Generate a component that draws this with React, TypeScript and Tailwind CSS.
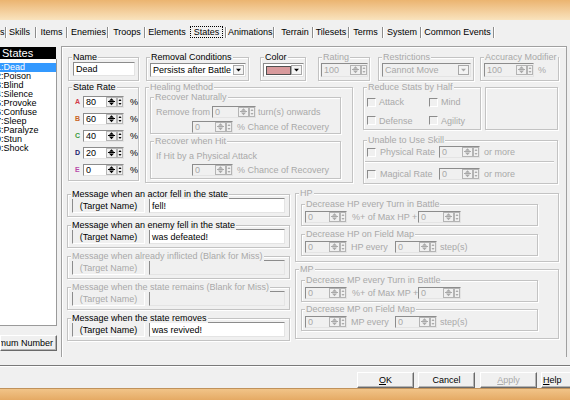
import React from 'react';

type P = { className?: string; children?: React.ReactNode; dis?: boolean };

const DIS = 'text-[#a9a9a9]';
const SUNK = 'border border-t-[#8c8c8c] border-l-[#8c8c8c] border-b-[#e4e4e4] border-r-[#e4e4e4]';

function Group({ legend, dis, className = '', children }: P & { legend?: string }) {
  return (
    <div className={`relative shrink-0 border border-[#c3c3c3] shadow-[inset_1px_1px_0_#ffffff,1px_1px_0_#ffffff] ${className}`}>
      {legend ? (
        <span className={`absolute left-[3px] -top-[6px] px-[1px] bg-[#f0f0f0] leading-[10px] whitespace-nowrap ${dis ? DIS : 'text-black'}`}>
          {legend}
        </span>
      ) : null}
      {children}
    </div>
  );
}

function SpinBtns({ dis }: { dis?: boolean }) {
  const c = dis ? '#a9a9a9' : '#000000';
  return (
    <svg width="17" height="10" viewBox="0 0 17 10" className="shrink-0">
      <rect x="0.5" y="0.5" width="10" height="9" fill="#f0f0f0" stroke="#b4b4b4" />
      <path d="M5.5 1.2 L8 3.7 L3 3.7 Z" fill={c} />
      <line x1="2" y1="4.5" x2="9" y2="4.5" stroke={c} strokeWidth="1" />
      <path d="M3 5.6 L8 5.6 L5.5 8.3 Z" fill={c} />
      <rect x="11.5" y="0.5" width="5" height="9" fill="#f0f0f0" stroke="#b4b4b4" />
      <path d="M14 2 L15.5 4 L12.5 4 Z M12.5 6 L15.5 6 L14 8 Z" fill={c} />
    </svg>
  );
}

function Arrow({ dis }: { dis?: boolean }) {
  const c = dis ? '#a9a9a9' : '#000000';
  return (
    <svg width="11" height="10" viewBox="0 0 11 10" className="shrink-0 mr-[1px]">
      <rect x="0.5" y="0.5" width="10" height="9" fill="#f4f4f4" stroke="#a8a8a8" />
      <path d="M3 3.8 L8 3.8 L5.5 6.5 Z" fill={c} />
    </svg>
  );
}

function Spin({ value, dis, className = '' }: { value: string; dis?: boolean; className?: string }) {
  return (
    <div className={`${SUNK} shrink-0 ${dis ? 'bg-[#f0f0f0]' : 'bg-white'} flex items-center ${className}`}>
      <span className={`flex-1 pl-[2px] leading-[10px] ${dis ? DIS : 'text-black'}`}>{value}</span>
      <SpinBtns dis={dis} />
    </div>
  );
}

function TBox({ className = '', children, dis }: P) {
  return (
    <div className={`${SUNK} shrink-0 ${dis ? 'bg-[#f0f0f0]' : 'bg-white'} flex items-center pl-[2px] whitespace-nowrap overflow-hidden ${className}`}>
      {children}
    </div>
  );
}

function Chk() {
  return (
    <span className="inline-block shrink-0 w-[9px] h-[9px] border border-t-[#8c8c8c] border-l-[#8c8c8c] border-b-[#ffffff] border-r-[#ffffff]" />
  );
}

function Msg({ legend, value, dis }: { legend: string; value: string; dis?: boolean }) {
  return (
    <Group legend={legend} dis={dis} className="h-[23px] pl-[4px] pt-[3px] flex items-start">
      <div
        className={`shrink-0 w-[73px] h-[15px] border border-t-[#8c8c8c] border-l-[#8c8c8c] border-b-[#ffffff] border-r-[#ffffff] flex items-center justify-center whitespace-nowrap ${dis ? DIS : 'text-black'}`}
      >
        (Target Name)
      </div>
      <TBox dis={dis} className="ml-[4px] w-[136px] h-[15px]">
        {value}
      </TBox>
    </Group>
  );
}

const tabs = [
  { t: 's', c: 'ml-[0px] w-[4px] text-left', s: 'ml-[1px]' },
  { t: 'Skills', c: 'ml-[3px] w-[20px]', s: 'ml-[6px]' },
  { t: 'Items', c: 'ml-[4px] w-[23px]', s: 'ml-[3px]' },
  { t: 'Enemies', c: 'ml-[4px] w-[34px]', s: 'ml-[2px]' },
  { t: 'Troops', c: 'ml-[5px] w-[28px]', s: 'ml-[3px]' },
  { t: 'Elements', c: 'ml-[3px] w-[38px]', s: '' },
  { t: 'States', c: 'ml-[4px] w-[33px] h-[12px] border border-dotted border-black flex items-center justify-center', s: 'ml-[2px]' },
  { t: 'Animations', c: 'ml-[2px] w-[44px]', s: 'ml-[1px]' },
  { t: 'Terrain', c: 'ml-[6px] w-[30px]', s: 'ml-[2px]' },
  { t: 'Tilesets', c: 'ml-[2px] w-[32px]', s: 'ml-[1px]' },
  { t: 'Terms', c: 'ml-[3px] w-[27px]', s: 'ml-[3px]' },
  { t: 'System', c: 'ml-[4px] w-[30px]', s: 'ml-[3px]' },
  { t: 'Common Events', c: 'ml-[3px] w-[67px]', s: 'ml-[2px]' },
];

const states = ['Dead', 'Poison', 'Blind', 'Silence', 'Provoke', 'Confuse', 'Sleep', 'Paralyze', 'Stun', 'Shock'];

const rates = [
  { l: 'A', v: '80', c: 'text-[#d23a4a]' },
  { l: 'B', v: '60', c: 'text-[#c8641e]' },
  { l: 'C', v: '40', c: 'text-[#3a9a3a]' },
  { l: 'D', v: '20', c: 'text-[#22226e]' },
  { l: 'E', v: '0', c: 'text-[#b84aa8]' },
];

function Btn({ children, dis, className = '' }: P) {
  return (
    <div
      className={`shrink-0 h-[16px] w-[57px] flex items-center border border-t-[#ffffff] border-l-[#ffffff] border-b-[#6a6a6a] border-r-[#6a6a6a] shadow-[inset_-1px_-1px_0_#b4b4b4] ${dis ? DIS : 'text-black'} ${className}`}
    >
      {children}
    </div>
  );
}

export default function App() {
  return (
    <div className="w-[570px] h-[400px] overflow-hidden bg-[#f0f0f0] flex flex-col font-['Liberation_Sans',Arial,sans-serif] text-[9px] leading-[10px] text-black">
      {/* window frame top */}
      <div className="h-[20px] shrink-0 bg-gradient-to-b from-[#ebb470] to-[#f9e3bd]" />

      {/* tab strip */}
      <div className="h-[26px] shrink-0 flex items-center pb-[2px] whitespace-nowrap">
        {tabs.map((t) => (
          <React.Fragment key={t.t}>
            <span className={`shrink-0 text-center ${t.c}`}>{t.t}</span>
            {t.s ? (
              <span className={`shrink-0 w-[1px] h-[11px] bg-[#8c8c8c] shadow-[1px_0_0_#ffffff] ${t.s}`} />
            ) : null}
          </React.Fragment>
        ))}
      </div>

      {/* body */}
      <div className="h-[319px] shrink-0 flex">
        {/* left list column */}
        <div className="w-[57px] shrink-0 flex flex-col">
          <div className="mt-[1px] h-[12px] w-[56px] bg-black text-white text-[11px] leading-[12px] pl-[2px] whitespace-nowrap">
            States
          </div>
          <div className="h-[267px] bg-white border-r border-b border-[#9a9a9a] pt-[4px] overflow-hidden">
            {states.map((s, i) => (
              <div
                key={s}
                className={`h-[9px] leading-[9px] whitespace-nowrap overflow-hidden ${i === 0 ? 'bg-[#3399ff] text-white' : 'text-black'}`}
              >
                <span className="inline-block -ml-[4px]">
                  {(i + 1) % 10}:{s}
                </span>
              </div>
            ))}
          </div>
          <div className="mt-[9px] h-[16px] w-[57px] overflow-hidden flex items-center justify-end pr-[3px] whitespace-nowrap border border-t-[#ffffff] border-l-[#ffffff] border-b-[#6a6a6a] border-r-[#6a6a6a] shadow-[inset_-1px_-1px_0_#b4b4b4]">
            Change Maximum Number
          </div>
        </div>

        {/* tab page */}
        <div className="ml-[4px] w-[506px] h-[311px] shrink-0 border-l border-t border-r border-[#a0a0a0] shadow-[inset_1px_1px_0_#ffffff] pl-[5px] pt-[10px] flex flex-col">
          {/* row 1 */}
          <div className="flex ml-[1px] items-start">
            <Group legend="Name" className="w-[71px] h-[24px] pl-[4px] pt-[4px]">
              <TBox className="w-[62px] h-[14px]">Dead</TBox>
            </Group>
            <Group legend="Removal Conditions" className="ml-[7px] w-[103px] h-[24px] pl-[3px] pt-[5px]">
              <div className={`${SUNK} bg-white w-[96px] h-[14px] flex items-center`}>
                <span className="flex-1 pl-[2px] whitespace-nowrap overflow-hidden">Persists after Battle</span>
                <Arrow />
              </div>
            </Group>
            <Group legend="Color" className="ml-[11px] w-[46px] h-[24px] pl-[2px] pt-[5px]">
              <div className={`${SUNK} bg-white w-[41px] h-[14px] flex items-center`}>
                <span className="ml-[2px] w-[26px] h-[9px] bg-[#d89a9c] border border-[#505050]" />
                <span className="flex-1" />
                <Arrow />
              </div>
            </Group>
            <Group legend="Rating" dis className="ml-[12px] w-[52px] h-[24px] pl-[2px] pt-[5px]">
              <Spin value="100" dis className="w-[47px] h-[14px]" />
            </Group>
            <Group legend="Restrictions" dis className="ml-[8px] w-[96px] h-[24px] pl-[3px] pt-[5px]">
              <div className={`${SUNK} bg-[#f0f0f0] w-[89px] h-[14px] flex items-center`}>
                <span className={`flex-1 pl-[2px] whitespace-nowrap overflow-hidden ${DIS}`}>Cannot Move</span>
                <Arrow dis />
              </div>
            </Group>
            <Group legend="Accuracy Modifier" dis className="ml-[6px] w-[79px] h-[24px] pl-[3px] pt-[5px] flex items-start">
              <Spin value="100" dis className="w-[50px] h-[14px]" />
              <span className={`ml-[4px] mt-[2px] ${DIS}`}>%</span>
            </Group>
          </div>

          {/* row 2 */}
          <div className="flex ml-[1px] mt-[6px] items-start">
            <Group legend="State Rate" className="w-[71px] h-[94px] pl-[5px] pt-[8px] flex flex-col gap-[5px]">
              {rates.map((r) => (
                <div key={r.l} className="flex items-center h-[12px]">
                  <span className={`shrink-0 w-[9px] pl-[1px] text-[7px] font-bold leading-[8px] ${r.c}`}>{r.l}</span>
                  <Spin value={r.v} className="w-[41px] h-[12px]" />
                  <span className="ml-[6px]">%</span>
                </div>
              ))}
            </Group>

            <Group legend="Healing Method" dis className="ml-[6px] w-[208px] h-[96px] pl-[4px] pt-[9px] flex flex-col">
              <Group legend="Recover Naturally" dis className="w-[191px] h-[37px] pt-[8px] flex flex-col">
                <div className={`flex items-center h-[12px] pl-[5px] ${DIS}`}>
                  <span className="shrink-0 w-[56px] whitespace-nowrap">Remove from</span>
                  <Spin value="0" dis className="w-[44px] h-[12px]" />
                  <span className="ml-[2px] whitespace-nowrap">turn(s) onwards</span>
                </div>
                <div className={`flex items-center h-[12px] mt-[3px] pl-[41px] ${DIS}`}>
                  <Spin value="0" dis className="w-[41px] h-[12px]" />
                  <span className="ml-[4px] whitespace-nowrap">% Chance of Recovery</span>
                </div>
              </Group>
              <Group legend="Recover when Hit" dis className="mt-[7px] w-[191px] h-[38px] pt-[9px] flex flex-col">
                <div className={`pl-[5px] h-[10px] whitespace-nowrap ${DIS}`}>If Hit by a Physical Attack</div>
                <div className={`flex items-center h-[12px] mt-[3px] pl-[41px] ${DIS}`}>
                  <Spin value="0" dis className="w-[41px] h-[12px]" />
                  <span className="ml-[4px] whitespace-nowrap">% Chance of Recovery</span>
                </div>
              </Group>
            </Group>

            <div className="ml-[10px] w-[195px] shrink-0 flex flex-col">
              <div className="flex items-start">
                <Group legend="Reduce Stats by Half" dis className="w-[118px] h-[43px] pl-[3px] pt-[9px] grid grid-cols-[62px_1fr] gap-y-[5px]">
                  {['Attack', 'Mind', 'Defense', 'Agility'].map((s) => (
                    <div key={s} className={`flex items-center h-[10px] ${DIS}`}>
                      <Chk />
                      <span className="ml-[3px]">{s}</span>
                    </div>
                  ))}
                </Group>
                <Group className="ml-[4px] w-[73px] h-[43px]" />
              </div>
              <Group legend="Unable to Use Skill" dis className="mt-[10px] w-[195px] h-[44px] pt-[5px] flex flex-col">
                <div className={`flex items-center h-[12px] pl-[3px] ${DIS}`}>
                  <Chk />
                  <span className="shrink-0 ml-[4px] w-[59px] whitespace-nowrap">Physical Rate</span>
                  <Spin value="0" dis className="w-[41px] h-[12px]" />
                  <span className="ml-[4px] whitespace-nowrap">or more</span>
                </div>
                <div className="mt-[3px] ml-[1px] w-[189px] h-[2px] border-t border-[#c3c3c3] bg-white" />
                <div className={`flex items-center h-[12px] mt-[5px] pl-[3px] ${DIS}`}>
                  <Chk />
                  <span className="shrink-0 ml-[4px] w-[59px] whitespace-nowrap">Magical Rate</span>
                  <Spin value="0" dis className="w-[41px] h-[12px]" />
                  <span className="ml-[4px] whitespace-nowrap">or more</span>
                </div>
              </Group>
            </div>
          </div>

          {/* row 3 */}
          <div className="flex mt-[9px] items-start">
            <div className="w-[223px] shrink-0 mt-[1px] flex flex-col gap-[8px]">
              <Msg legend="Message when an actor fell in the state" value="fell!" />
              <Msg legend="Message when an enemy fell in the state" value="was defeated!" />
              <Msg legend="Message when already inflicted (Blank for Miss)" value="" dis />
              <Msg legend="Message when the state remains (Blank for Miss)" value="" dis />
              <Msg legend="Message when the state removes" value="was revived!" />
            </div>

            <div className="ml-[5px] w-[264px] shrink-0 flex flex-col">
              <Group legend="HP" dis className="h-[69px] pl-[5px] pt-[10px] flex flex-col">
                <Group legend="Decrease HP every Turn in Battle" dis className="w-[237px] h-[22px] pl-[3px] pt-[6px]">
                  <div className={`flex items-center h-[12px] ${DIS}`}>
                    <Spin value="0" dis className="w-[42px] h-[12px]" />
                    <span className="shrink-0 ml-[5px] w-[66px] whitespace-nowrap">%+ of Max HP +</span>
                    <Spin value="0" dis className="w-[43px] h-[12px]" />
                  </div>
                </Group>
                <Group legend="Decrease HP on Field Map" dis className="mt-[8px] w-[237px] h-[22px] pl-[3px] pt-[6px]">
                  <div className={`flex items-center h-[12px] ${DIS}`}>
                    <Spin value="0" dis className="w-[42px] h-[12px]" />
                    <span className="shrink-0 ml-[4px] w-[44px] whitespace-nowrap">HP every</span>
                    <Spin value="0" dis className="w-[42px] h-[12px]" />
                    <span className="ml-[3px] whitespace-nowrap">step(s)</span>
                  </div>
                </Group>
              </Group>
              <Group legend="MP" dis className="mt-[7px] h-[70px] pl-[5px] pt-[10px] flex flex-col">
                <Group legend="Decrease MP every Turn in Battle" dis className="w-[237px] h-[22px] pl-[3px] pt-[6px]">
                  <div className={`flex items-center h-[12px] ${DIS}`}>
                    <Spin value="0" dis className="w-[42px] h-[12px]" />
                    <span className="shrink-0 ml-[5px] w-[66px] whitespace-nowrap">%+ of Max MP +</span>
                    <Spin value="0" dis className="w-[43px] h-[12px]" />
                  </div>
                </Group>
                <Group legend="Decrease MP on Field Map" dis className="mt-[7px] w-[237px] h-[22px] pl-[3px] pt-[6px]">
                  <div className={`flex items-center h-[12px] ${DIS}`}>
                    <Spin value="0" dis className="w-[42px] h-[12px]" />
                    <span className="shrink-0 ml-[4px] w-[44px] whitespace-nowrap">MP every</span>
                    <Spin value="0" dis className="w-[42px] h-[12px]" />
                    <span className="ml-[3px] whitespace-nowrap">step(s)</span>
                  </div>
                </Group>
              </Group>
            </div>
          </div>
        </div>
      </div>

      {/* separator */}
      <div className="h-[2px] shrink-0 border-t border-[#7a7a7a] bg-white" />

      {/* buttons */}
      <div className="h-[21px] shrink-0 flex items-start pt-[5px] whitespace-nowrap">
        <Btn className="ml-[357px] justify-center">
          <span className="underline">O</span>K
        </Btn>
        <Btn className="ml-[4px] justify-center">Cancel</Btn>
        <Btn dis className="ml-[5px] justify-center">
          <span className="underline">A</span>pply
        </Btn>
        <Btn className="ml-[4px] pl-[1px]">
          <span className="underline">H</span>elp
        </Btn>
      </div>

      {/* window frame bottom */}
      <div className="flex-1 border-t border-[#c0925c] bg-gradient-to-b from-[#f1c488] to-[#e5aa64]" />
    </div>
  );
}
